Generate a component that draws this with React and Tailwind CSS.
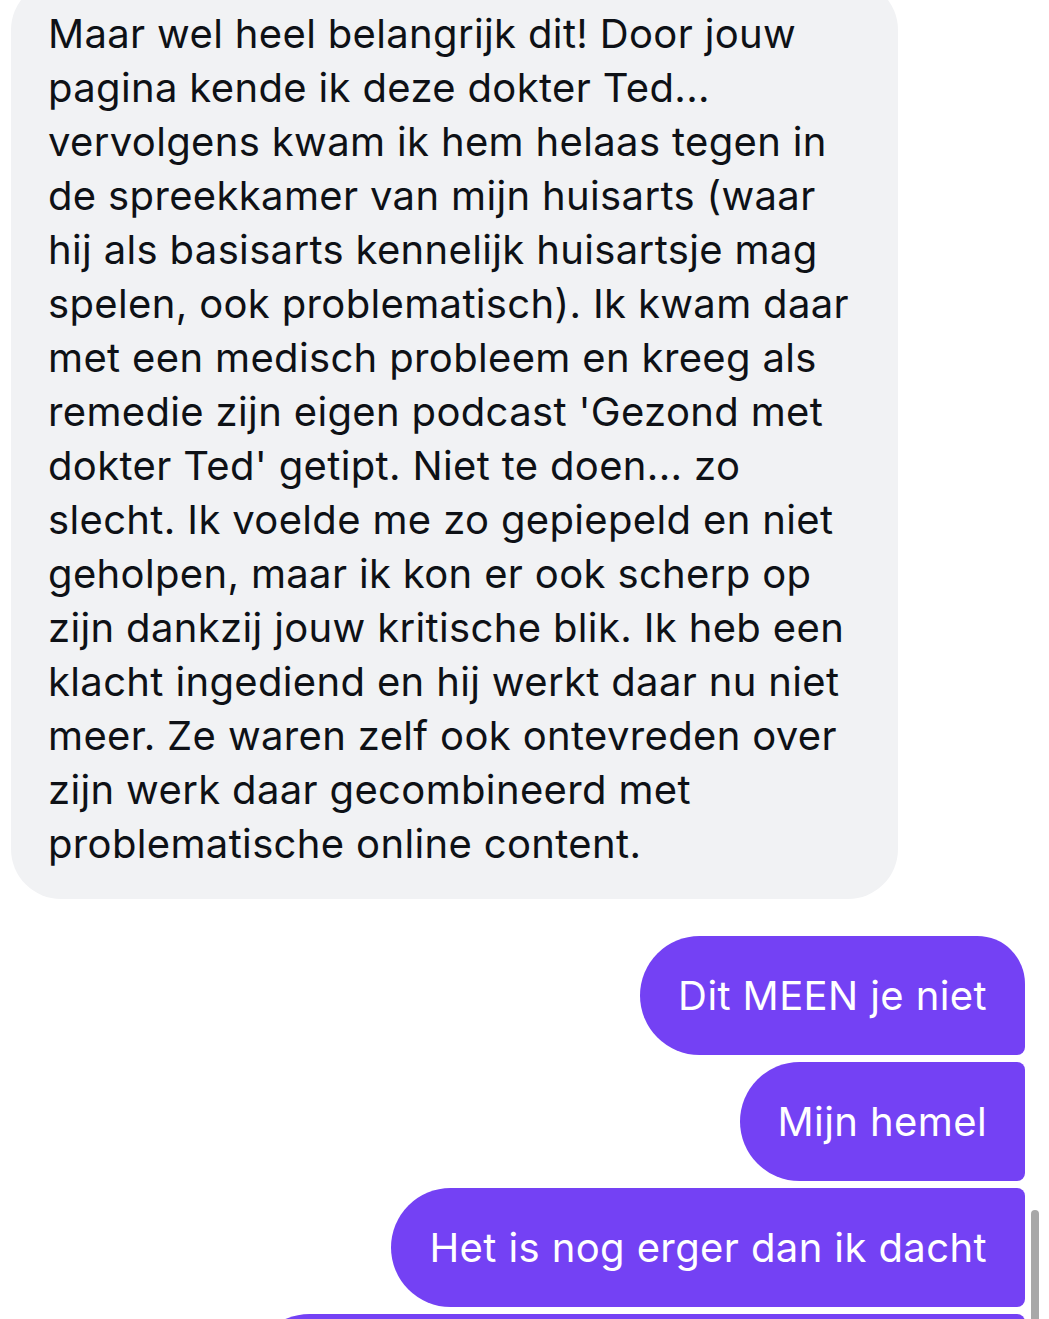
import React from "react";

const lines = [
  "Maar wel heel belangrijk dit! Door jouw",
  "pagina kende ik deze dokter Ted...",
  "vervolgens kwam ik hem helaas tegen in",
  "de spreekkamer van mijn huisarts (waar",
  "hij als basisarts kennelijk huisartsje mag",
  "spelen, ook problematisch). Ik kwam daar",
  "met een medisch probleem en kreeg als",
  "remedie zijn eigen podcast 'Gezond met",
  "dokter Ted' getipt. Niet te doen... zo",
  "slecht. Ik voelde me zo gepiepeld en niet",
  "geholpen, maar ik kon er ook scherp op",
  "zijn dankzij jouw kritische blik. Ik heb een",
  "klacht ingediend en hij werkt daar nu niet",
  "meer. Ze waren zelf ook ontevreden over",
  "zijn werk daar gecombineerd met",
  "problematische online content.",
];

export default function App() {
  return (
    <div
      className="relative min-h-[1319px] w-[1049px] overflow-hidden bg-white"
      style={{ fontFamily: "Inter, 'Noto Sans', sans-serif" }}
    >
      <div className="ml-[11px] mt-[-20px] w-[887px] rounded-[50px] bg-[#f1f2f4] pl-[37px] pt-[27px] pb-[28px] text-[40px] leading-[54px] tracking-[0.35px] text-[#0e1116]">
        {lines.map((l, i) => (
          <div key={i} className="whitespace-nowrap">
            {l}
          </div>
        ))}
      </div>

      <div className="mt-[37px] mr-[24px] flex flex-col items-end gap-[7px] text-[40px] leading-[54px] tracking-[0.4px] text-white">
        <div className="flex h-[119px] items-center rounded-tl-[60px] rounded-tr-[48px] rounded-br-[8px] rounded-bl-[60px] bg-[#7441f4] px-[38px]">
          Dit MEEN je niet
        </div>
        <div className="flex h-[119px] items-center rounded-tl-[60px] rounded-tr-[8px] rounded-br-[8px] rounded-bl-[60px] bg-[#7441f4] px-[38px]">
          Mijn hemel
        </div>
        <div className="flex h-[119px] items-center rounded-tl-[60px] rounded-tr-[8px] rounded-br-[8px] rounded-bl-[60px] bg-[#7441f4] px-[38px]">
          Het is nog erger dan ik dacht
        </div>
        <div className="h-[119px] w-[775px] rounded-tl-[60px] rounded-tr-[8px] rounded-br-[8px] rounded-bl-[60px] bg-[#7441f4]" />
      </div>

      <div className="absolute right-[10px] top-[1210px] h-[140px] w-[8px] rounded-full bg-[#a8a8a8]" />
    </div>
  );
}
